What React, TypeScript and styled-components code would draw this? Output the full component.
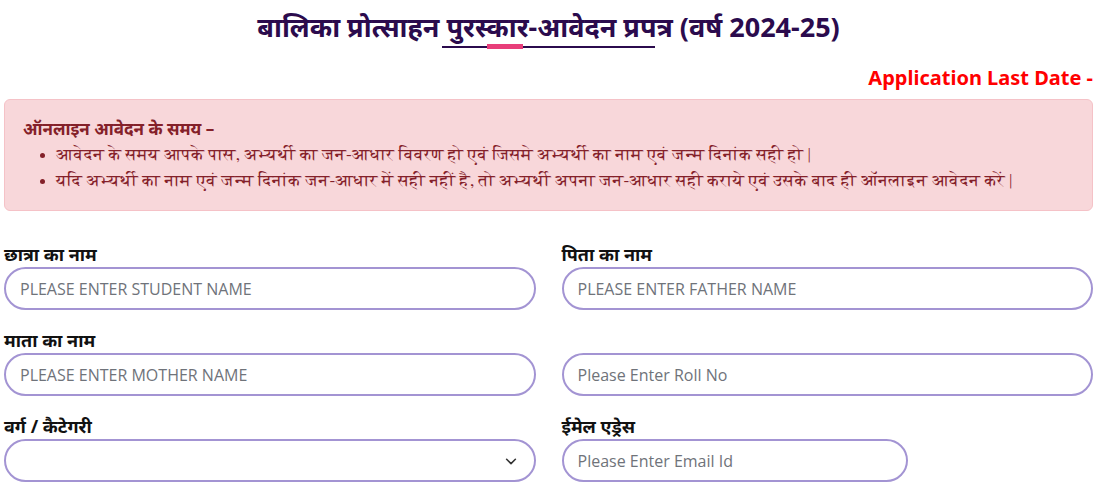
import styled, { createGlobalStyle } from "styled-components";

const GlobalStyle = createGlobalStyle`
  body {
    margin: 0;
    background: #fff;
    font-family: "Noto Sans", "Open Sans", sans-serif;
  }
`

const Page = styled.div`
  padding: 0 7px 0 4px;
`

const TitleWrap = styled.header`
  display: flex;
  flex-direction: column;
  align-items: center;
  padding-top: 9px;
`

const Title = styled.h1`
  margin: 0;
  font-size: 27px;
  line-height: 36px;
  font-weight: 700;
  color: #2b0b4d;
`

const Underline = styled.div`
  position: relative;
  width: 213px;
  height: 2px;
  margin-top: 1px;
  background: #2b0b4d;
  &::after {
    content: "";
    position: absolute;
    left: 45px;
    top: -2px;
    width: 36px;
    height: 5px;
    background: #e83e7a;
  }
`

const LastDate = styled.p`
  margin: 17px 0 0;
  text-align: right;
  font-size: 20px;
  line-height: 26px;
  font-weight: 700;
  color: #f00;
`

const Alert = styled.section`
  margin-top: 8px;
  padding: 16px 18px 16px;
  background: #f8d7da;
  border: 1px solid #f5c2c7;
  border-radius: 6px;
  color: #842029;
  h4 {
    margin: 0;
    font-size: 17px;
    line-height: 26px;
    font-weight: 700;
  }
  ul {
    margin: 0;
    padding-left: 33px;
  }
  li {
    font-size: 17px;
    line-height: 26px;
    font-family: "FreeSerif", "Liberation Serif", serif;
  }
`

const FormGrid = styled.div`
  display: grid;
  grid-template-columns: 1fr 1fr;
  column-gap: 26px;
  row-gap: 19px;
  margin-top: 32px;
`

const Field = styled.div<{ $width?: number }>`
  display: flex;
  flex-direction: column;
  justify-content: flex-end;
  width: ${p => (p.$width ? `${p.$width}px` : "auto")};
`

const Label = styled.label`
  font-size: 18px;
  line-height: 22px;
  font-weight: 700;
  color: #111;
  margin-bottom: 2px;
`

const Input = styled.input`
  box-sizing: border-box;
  height: 43px;
  width: 100%;
  padding: 0 14px;
  border: 2.5px solid #a394d3;
  border-radius: 22px;
  font-family: "Open Sans", "Noto Sans", sans-serif;
  font-size: 16px;
  color: #333;
  outline: none;
  &::placeholder {
    color: #6f737a;
  }
`

const SelectBox = styled.div`
  box-sizing: border-box;
  height: 43px;
  border: 2.5px solid #a394d3;
  border-radius: 22px;
  display: flex;
  align-items: center;
  justify-content: flex-end;
  padding-right: 16px;
  color: #333;
`

function Chevron() {
  return (
    <svg width="14" height="14" viewBox="0 0 16 16" fill="none">
      <path d="M3 6l5 5 5-5" stroke="#333" strokeWidth="1.8" strokeLinecap="round" strokeLinejoin="round" />
    </svg>
  )
}

export default function App() {
  return (
    <Page>
      <GlobalStyle />
      <TitleWrap>
        <Title>बालिका प्रोत्साहन पुरस्कार-आवेदन प्रपत्र (वर्ष 2024-25)</Title>
        <Underline />
      </TitleWrap>
      <LastDate>Application Last Date -</LastDate>
      <Alert>
        <h4>ऑनलाइन आवेदन के समय –</h4>
        <ul>
          <li>आवेदन के समय आपके पास, अभ्यर्थी का जन-आधार विवरण हो एवं जिसमे अभ्यर्थी का नाम एवं जन्म दिनांक सही हो |</li>
          <li>यदि अभ्यर्थी का नाम एवं जन्म दिनांक जन-आधार में सही नहीं है, तो अभ्यर्थी अपना जन-आधार सही कराये एवं उसके बाद ही ऑनलाइन आवेदन करें |</li>
        </ul>
      </Alert>
      <FormGrid>
        <Field>
          <Label>छात्रा का नाम</Label>
          <Input placeholder="PLEASE ENTER STUDENT NAME" />
        </Field>
        <Field>
          <Label>पिता का नाम</Label>
          <Input placeholder="PLEASE ENTER FATHER NAME" />
        </Field>
        <Field>
          <Label>माता का नाम</Label>
          <Input placeholder="PLEASE ENTER MOTHER NAME" />
        </Field>
        <Field>
          <Input placeholder="Please Enter Roll No" />
        </Field>
        <Field>
          <Label>वर्ग / कैटेगरी</Label>
          <SelectBox>
            <Chevron />
          </SelectBox>
        </Field>
        <Field $width={346}>
          <Label>ईमेल एड्रेस</Label>
          <Input placeholder="Please Enter Email Id" />
        </Field>
      </FormGrid>
    </Page>
  )
}
